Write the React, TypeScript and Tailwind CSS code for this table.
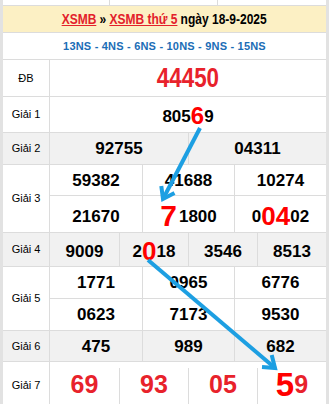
import React from 'react';

const line = 'border-[#dcdcdc]';

type RowProps = {
  label: string;
  gray?: boolean;
  h: string;
  children: React.ReactNode;
};

const Row: React.FC<RowProps> = ({ label, gray, h, children }) => (
  <div className={`flex border-b ${line} ${gray ? 'bg-[#f1f1f1]' : 'bg-white'} ${h}`}>
    <div className={`w-[47px] shrink-0 border-r ${line} flex items-center justify-center text-[11px] text-black`}>
      {label}
    </div>
    <div className="flex-1 min-w-0 flex flex-col">{children}</div>
  </div>
);

const Num: React.FC<{ children: React.ReactNode; className?: string; red?: boolean }> = ({
  children,
  className = '',
  red,
}) => (
  <div
    className={`flex-1 flex items-center justify-center font-bold leading-none ${
      red ? 'text-[25px] text-[#e8222b]' : 'text-[17px] text-black'
    } ${className}`}
  >
    {children}
  </div>
);

const Big: React.FC<{ children: React.ReactNode; size: string }> = ({ children, size }) => (
  <span className={`text-[#ff0000] leading-none ${size}`}>{children}</span>
);

const App: React.FC = () => {
  return (
    <div className="relative w-[329px] h-[404px] overflow-hidden bg-white font-['Liberation_Sans',Arial,sans-serif]">
      <div className="border-x-[3px] border-[#e2e2e2] h-full">
        {/* tail of the table above */}
        <div className={`flex h-[6px] border-b ${line}`}>
          <div className={`w-[107px] border-r ${line}`} />
          <div className={`w-[108px] border-r ${line}`} />
          <div className="flex-1" />
        </div>

        <div className={`h-[27px] bg-[#fcf0c4] border-b ${line} flex items-center justify-center`}>
          <span className="inline-block whitespace-nowrap scale-x-80 font-bold text-[15px] text-black">
            <a className="text-[#e3212b] underline">XSMB</a>
            <span className="mx-[4px]">»</span>
            <a className="text-[#e3212b] underline">XSMB thứ 5</a>
            <span className="ml-[4px]">ngày 18-9-2025</span>
          </span>
        </div>

        <div className={`h-[27px] border-b ${line} flex items-center justify-center font-bold text-[11px] tracking-[0.2px] text-[#1b6db6]`}>
          13NS - 4NS - 6NS - 10NS - 9NS - 15NS
        </div>

        <Row label="ĐB" h="h-[37px]">
          <div className="flex-1 flex items-center justify-center">
            <span className="inline-block scale-x-80 font-bold text-[28px] leading-none text-[#e8222b]">44450</span>
          </div>
        </Row>

        <Row label="Giải 1" h="h-[36px]">
          <Num className="pt-[3px]">
            805<Big size="text-[24px]">6</Big>9
          </Num>
        </Row>

        <Row label="Giải 2" gray h="h-[32px]">
          <div className="flex-1 grid grid-cols-2">
            <Num>92755</Num>
            <Num className={`border-l ${line}`}>04311</Num>
          </div>
        </Row>

        <Row label="Giải 3" h="h-[68px]">
          <div className={`h-[31px] grid grid-cols-3 border-b ${line}`}>
            <Num>59382</Num>
            <Num className={`border-l ${line}`}>41688</Num>
            <Num className={`border-l ${line}`}>10274</Num>
          </div>
          <div className="flex-1 grid grid-cols-3">
            <Num className="pt-[4px]">21670</Num>
            <Num className={`border-l ${line} pt-[4px]`}>
              <Big size="text-[30px] mr-[2px]">7</Big>1800
            </Num>
            <Num className={`border-l ${line} pt-[4px]`}>
              0<Big size="text-[26px]">04</Big>02
            </Num>
          </div>
        </Row>

        <Row label="Giải 4" gray h="h-[34px]">
          <div className="flex-1 grid grid-cols-4">
            <Num className="pt-[3px]">9009</Num>
            <Num className={`border-l ${line} pt-[3px]`}>
              2<Big size="text-[26px]">0</Big>18
            </Num>
            <Num className={`border-l ${line} pt-[3px]`}>3546</Num>
            <Num className={`border-l ${line} pt-[3px]`}>8513</Num>
          </div>
        </Row>

        <Row label="Giải 5" h="h-[64px]">
          <div className={`h-[32px] grid grid-cols-3 border-b ${line}`}>
            <Num>1771</Num>
            <Num className={`border-l ${line}`}>0965</Num>
            <Num className={`border-l ${line}`}>6776</Num>
          </div>
          <div className="flex-1 grid grid-cols-3">
            <Num>0623</Num>
            <Num className={`border-l ${line}`}>7173</Num>
            <Num className={`border-l ${line}`}>9530</Num>
          </div>
        </Row>

        <Row label="Giải 6" gray h="h-[31px]">
          <div className="flex-1 grid grid-cols-3">
            <Num>475</Num>
            <Num className={`border-l ${line}`}>989</Num>
            <Num className={`border-l ${line}`}>682</Num>
          </div>
        </Row>

        <Row label="Giải 7" h="h-[48px]">
          <div className="flex-1 grid grid-cols-4 pt-[6px]">
            <Num red className="pb-[8px]">69</Num>
            <Num red className={`border-l ${line} pb-[8px]`}>93</Num>
            <Num red className={`border-l ${line} pb-[8px]`}>05</Num>
            <Num red className={`border-l ${line} pb-[8px]`}>
              <Big size="text-[33px]">5</Big>9
            </Num>
          </div>
        </Row>
      </div>

      {/* arrows drawn over the table */}
      <svg className="absolute inset-0 pointer-events-none" width="329" height="404" viewBox="0 0 329 404">
        <g stroke="#1d9fe2" strokeWidth="4" fill="none" strokeLinejoin="miter">
          <line x1="200" y1="128" x2="163" y2="199" />
          <polyline points="161.3,186 163,199 174.5,193" />
          <line x1="148" y1="260" x2="275" y2="368" />
          <polyline points="271.7,355 275,368 262,367" />
        </g>
      </svg>
    </div>
  );
};

export default App;
